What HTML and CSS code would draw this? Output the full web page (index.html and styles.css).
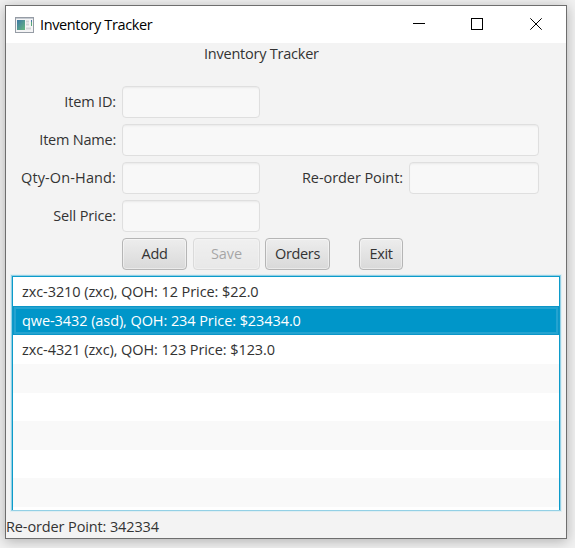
FILE: index.html
```html
<!DOCTYPE html>
<html lang="en">
<head>
<meta charset="utf-8">
<title>Inventory Tracker</title>
<link rel="stylesheet" href="styles.css">
</head>
<body>
<main class="window">
  <header class="titlebar">
    <svg class="app-icon" width="19" height="16" viewBox="0 0 19 16">
      <defs><linearGradient id="g" x1="0" y1="0" x2="1" y2="1"><stop offset="0" stop-color="#3d78a6"/><stop offset="1" stop-color="#67b87e"/></linearGradient></defs>
      <rect x=".5" y=".5" width="18" height="15" fill="#f4f4f5" stroke="#969ca5"/>
      <path d="M1 1.5H18" stroke="#c5cbd2"/>
      <rect x="2" y="3" width="8" height="10" fill="url(#g)"/>
      <path d="M11 4.5H14M11 7.5H14M11 11.5H16" stroke="#d2d3d6" stroke-width="2"/>
      <path d="M16.5 3V9" stroke="#57a878"/>
      <path d="M16.5 3V5" stroke="#4777a5"/>
    </svg>
    <span class="title">Inventory Tracker</span>
    <svg class="controls" width="128" height="15" viewBox="0 0 128 15" fill="none" stroke="#000">
      <path d="M0 6.5H12"/>
      <rect x="58.5" y="1.5" width="11" height="11"/>
      <path d="M117.3 1.3L128.7 12.7M128.7 1.3L117.3 12.7"/>
    </svg>
  </header>
  <h1 class="heading">Inventory Tracker</h1>
  <form class="form">
    <label class="t-id">Item ID:</label><input class="short">
    <label class="t-name">Item Name:</label><input class="long">
    <label class="t-qty">Qty-On-Hand:</label><input class="short"><label class="reorder">Re-order Point:</label><input class="last">
    <label class="t-sell">Sell Price:</label><input class="short">
    <button type="button" class="add">Add</button><button type="button" class="save" disabled>Save</button><button type="button" class="orders">Orders</button><button type="button" class="exit">Exit</button>
  </form>
  <ul class="list">
    <li>zxc-3210 (zxc), QOH: 12 Price: $22.0</li>
    <li class="selected">qwe-3432 (asd), QOH: 234 Price: $23434.0</li>
    <li>zxc-4321 (zxc), QOH: 123 Price: $123.0</li>
    <li></li><li></li><li></li><li></li><li></li>
  </ul>
  <footer class="status">Re-order Point: 342334</footer>
</main>
</body>
</html>
```
FILE: styles.css
```css
* { box-sizing: border-box; }
body {
  margin: 0;
  padding: 5px;
  height: 548px;
  overflow: hidden;
  background: #f1f1f1;
  font: 14.5px/20px "Open Sans", "Noto Sans", sans-serif;
  letter-spacing: -0.35px;
  color: #333;
}
.window {
  width: 562px;
  height: 534px;
  border: 1px solid #6e6e6e;
  background: #f3f3f3;
  box-shadow: 0 2px 12px rgba(0, 0, 0, .28);
  display: flex;
  flex-direction: column;
  white-space: nowrap;
}
.titlebar {
  height: 37px;
  flex: none;
  background: #fff;
  color: #000;
  display: flex;
  align-items: center;
  padding: 0 25px 0 9px;
}
.app-icon { margin-right: 6px; }
.title { letter-spacing: -0.37px; }
.controls { margin-left: auto; overflow: visible; }
.heading {
  margin: 0;
  height: 43px;
  padding-top: 1px;
  font: inherit;
  letter-spacing: -0.23px;
  padding-left: 198px;
}
.form {
  display: grid;
  grid-template-columns: 110px 65px 67px 65px 73px 130px;
  grid-template-rows: repeat(5, 32px);
  column-gap: 6px;
  row-gap: 6px;
  align-items: center;
}
label { text-align: right; grid-column: 1; }
.t-id, .t-sell { letter-spacing: -0.15px; }
.t-name { letter-spacing: -0.22px; }
.t-qty { letter-spacing: 0.12px; }
input {
  width: 100%;
  height: 32px;
  border: 1px solid #dfdfdf;
  border-radius: 4px;
  background: #f8f8f8;
  box-shadow: inset 0 2px 2px -1px #e9e9e9;
  padding: 0 8px;
  font: inherit;
  outline: none;
}
.short { grid-column: 2 / 4; }
.long { grid-column: 2 / 7; width: 417px; }
.reorder { grid-column: 4 / 6; justify-self: end; margin-right: 7px; letter-spacing: -0.07px; }
.last { grid-column: 6; margin-left: -7px; }
button {
  height: 32px;
  padding: 0;
  border: 1px solid #b5b5b5;
  border-radius: 4px;
  background: linear-gradient(#ededed, #d9d9d9);
  box-shadow: inset 0 0 0 1px rgba(255, 255, 255, .45);
  font: inherit;
  letter-spacing: inherit;
  color: #333;
}
.add { grid-column: 2; }
.save { grid-column: 3; color: #333; opacity: .4; letter-spacing: -0.1px; }
.orders { grid-column: 4; margin-left: -1px; margin-right: 1px; }
.exit { grid-column: 5; width: 44px; margin-left: 22px; }
.list {
  margin: 5px 5px 0;
  height: 236px;
  flex: none;
  padding: 1px 1px 3px;
  list-style: none;
  background: #fff;
  border: 1px solid #93d0e5;
  box-shadow: inset 1px 1px #0c9bca, inset -1px 0 #0c9bca, 0 0 0 1px rgba(190, 228, 241, .35);
  letter-spacing: -0.08px;
}
.list li {
  height: 29px;
  padding: 5px 0 0 9px;
  color: #323232;
}
.list li:nth-child(n+4) { height: 28.6px; }
.list li:nth-child(n+4):nth-child(even) { background: #f9f9f9; }
.list .selected {
  background: #0096c9;
  box-shadow: inset 0 0 0 1px #0b96c8, inset 0 0 0 3px #24a3d0;
  color: #fff;
}
.status { padding-top: 6px; letter-spacing: -0.12px; }
```
